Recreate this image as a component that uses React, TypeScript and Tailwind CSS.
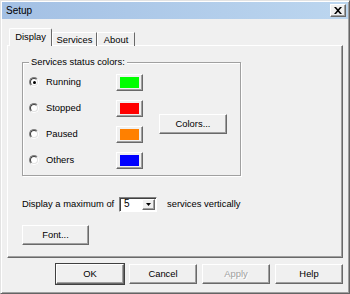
import React from 'react'

const font = "font-['Liberation_Sans',Arial,sans-serif] text-[9.4px] leading-none text-black"
const raised =
  'border border-t-white border-l-white border-r-[#696969] border-b-[#696969] shadow-[inset_-1px_-1px_0_#a0a0a0] bg-[#f0f0f0]'

const rows = [
  { label: 'Running', color: 'bg-[#00ff00]', checked: true },
  { label: 'Stopped', color: 'bg-[#ff0000]', checked: false },
  { label: 'Paused', color: 'bg-[#ff8000]', checked: false },
  { label: 'Others', color: 'bg-[#0000ff]', checked: false },
]

const Radio = ({ checked }: { checked: boolean }) => (
  <div className="w-[10px] h-[10px] rounded-full border border-t-[#808080] border-l-[#808080] border-r-white border-b-white">
    <div className="w-full h-full rounded-full border border-t-[#404040] border-l-[#404040] border-r-[#e3e3e3] border-b-[#e3e3e3] bg-white flex items-center justify-center">
      {checked && <div className="w-[3px] h-[3px] rounded-full bg-black" />}
    </div>
  </div>
)

const Button = ({ children, className = '', disabled = false }: { children: React.ReactNode; className?: string; disabled?: boolean }) => (
  <div
    className={`${raised} flex items-center justify-center ${disabled ? 'text-[#a0a0a0] [text-shadow:1px_1px_0_#fff]' : ''} ${className}`}
  >
    {children}
  </div>
)

export default function App() {
  return (
    <div className={`${font} w-[350px] h-[294px] bg-[#f0f0f0] border border-t-[#e3e3e3] border-l-[#e3e3e3] border-r-[#646464] border-b-[#646464] shadow-[inset_1px_1px_0_#fff,inset_-1px_-1px_0_#a0a0a0] flex flex-col`}>
      {/* title bar */}
      <div className="mx-[1px] mt-[1px] h-[17px] bg-gradient-to-r from-[#a3c0e4] to-[#bcd6ef] flex items-center justify-between pl-[4px] pr-[2px]">
        <span className="text-[10px]">Setup</span>
        <div className={`${raised} w-[16px] h-[13px] flex items-center justify-center`}>
          <svg width="8" height="7" viewBox="0 0 8 7">
            <path d="M0 0h2l2 2.2L6 0h2L5 3.5 8 7H6L4 4.8 2 7H0l3-3.5z" fill="#000" />
          </svg>
        </div>
      </div>

      {/* tabs */}
      <div className="ml-[8px] mt-[9px] h-[18px] flex items-end relative z-10 -mb-[1px]">
        <div className="h-[18px] w-[43px] border border-b-0 border-t-white border-l-white border-r-[#696969] bg-[#f0f0f0] flex items-center justify-center pb-[2px] rounded-t-[2px]">
          Display
        </div>
        <div className="h-[14px] w-[45px] border border-b-0 border-t-white border-l-white border-r-[#696969] flex items-center justify-center pt-[1px]">
          Services
        </div>
        <div className="h-[14px] w-[38px] border border-b-0 border-t-white border-l-white border-r-[#696969] flex items-center justify-center pt-[1px]">
          About
        </div>
      </div>

      {/* panel */}
      <div className="ml-[6px] w-[336px] h-[213px] border border-t-white border-l-white border-r-[#696969] border-b-[#696969] shadow-[inset_-1px_-1px_0_#a0a0a0] pl-[14px] pt-[16px]">
        <div className="relative w-[219px] h-[114px] border border-[#a0a0a0] shadow-[1px_1px_0_#fff,inset_1px_1px_0_#fff] pt-[4px] pl-[6px] flex items-center">
          <span className="absolute -top-[6px] left-[6px] bg-[#f0f0f0] px-[2px]">Services status colors:</span>
          <div className="flex flex-col">
            {rows.map((r) => (
              <div key={r.label} className="h-[26px] flex items-center">
                <Radio checked={r.checked} />
                <span className="ml-[7px] w-[70px]">{r.label}</span>
                <div className={`${raised} w-[27px] h-[17px] px-[3px] py-[2px]`}>
                  <div className={`w-full h-full ${r.color}`} />
                </div>
              </div>
            ))}
          </div>
          <Button className="ml-[16px] mt-[6px] w-[68px] h-[20px]">Colors...</Button>
        </div>

        <div className="mt-[21px] h-[14px] flex items-center">
          <span className="w-[97px]">Display a maximum of</span>
          <div className="w-[38px] h-[15px] bg-white border border-t-[#808080] border-l-[#808080] border-r-white border-b-white shadow-[inset_1px_1px_0_#404040] flex items-center justify-between pl-[4px] pr-[1px]">
            <span className="text-[10px]">5</span>
            <div className={`${raised} w-[13px] h-[11px] flex items-center justify-center`}>
              <svg width="5" height="3" viewBox="0 0 5 3">
                <path d="M0 0h5L2.5 3z" fill="#000" />
              </svg>
            </div>
          </div>
          <span className="ml-[10px]">services vertically</span>
        </div>

        <Button className="mt-[14px] w-[67px] h-[20px]">Font...</Button>
      </div>

      {/* dialog buttons */}
      <div className="mt-[6px] mr-[6px] flex justify-end gap-[5px]">
        <Button className="w-[68px] h-[20px] outline outline-1 outline-[#404040] -outline-offset-0">OK</Button>
        <Button className="w-[68px] h-[20px]">Cancel</Button>
        <Button className="w-[68px] h-[20px]" disabled>
          Apply
        </Button>
        <Button className="w-[68px] h-[20px]">Help</Button>
      </div>
    </div>
  )
}
